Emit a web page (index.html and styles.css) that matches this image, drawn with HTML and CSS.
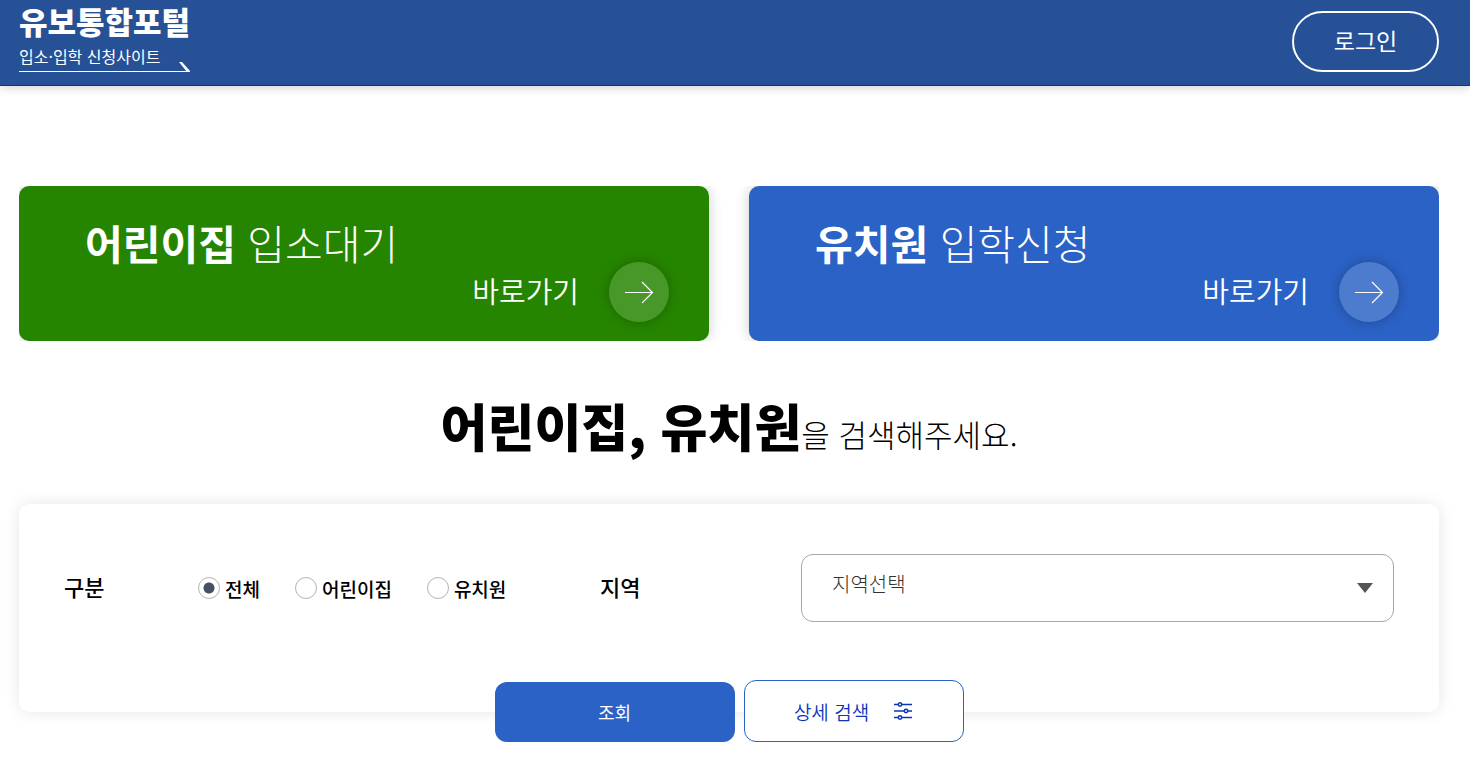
FILE: index.html
```html
<!DOCTYPE html>
<html lang="ko">
<head>
<meta charset="utf-8">
<meta name="viewport" content="width=device-width, initial-scale=1">
<title>유보통합포털</title>
<link rel="stylesheet" href="styles.css">
</head>
<body>
<header class="header">
  <a class="brand" href="#">
    <span class="brand-name">유보통합포털</span>
    <span class="brand-sub">입소·입학 신청사이트</span>
    <svg class="brand-tail" width="12" height="11" viewBox="0 0 12 11" aria-hidden="true"><path d="M1 1h3L12 10v1h-3z" fill="#fff"/></svg>
  </a>
  <button class="login" type="button">로그인</button>
</header>
<main class="main">
  <nav class="cards">
    <a class="card card-green" href="#">
      <span class="card-title"><strong>어린이집</strong> 입소대기</span>
      <span class="card-go"><span class="go-text">바로가기</span>
        <span class="circle"><svg width="30" height="24" viewBox="0 0 30 24" fill="none" stroke="#fff" stroke-width="1.2" aria-hidden="true"><path d="M1 12.500h27M18 2l10.500 10.500L18 23"/></svg></span>
      </span>
    </a>
    <a class="card card-blue" href="#">
      <span class="card-title"><strong>유치원</strong> 입학신청</span>
      <span class="card-go"><span class="go-text">바로가기</span>
        <span class="circle"><svg width="30" height="24" viewBox="0 0 30 24" fill="none" stroke="#fff" stroke-width="1.2" aria-hidden="true"><path d="M1 12.500h27M18 2l10.500 10.500L18 23"/></svg></span>
      </span>
    </a>
  </nav>
  <h1 class="heading"><strong>어린이집, 유치원</strong>을 검색해주세요.</h1>
  <form class="search">
    <div class="panel">
      <span class="label" id="kind">구분</span>
      <div class="radios" role="radiogroup" aria-labelledby="kind">
        <label class="radio"><input type="radio" name="kind" checked>전체</label>
        <label class="radio"><input type="radio" name="kind">어린이집</label>
        <label class="radio"><input type="radio" name="kind">유치원</label>
      </div>
      <label class="label" for="region">지역</label>
      <div class="select-wrap">
        <select class="select" id="region"><option>지역선택</option></select>
        <svg class="caret" width="16" height="10" viewBox="0 0 16 10" aria-hidden="true"><path d="M0 0h16L8 10z" fill="#555"/></svg>
      </div>
    </div>
    <div class="actions">
      <button class="btn btn-primary" type="button">조회</button>
      <button class="btn btn-outline" type="button">상세 검색
        <svg width="20" height="18" viewBox="0 0 20 18" fill="none" stroke="#0a36b8" stroke-width="1.5" aria-hidden="true"><path d="M1 2.500h4M9 2.500h10M1 9h10M15 9h4M1 15.500h4M9 15.500h10"/><circle cx="7" cy="2.500" r="1.700"/><circle cx="13" cy="9" r="1.700"/><circle cx="7" cy="15.500" r="1.700"/></svg>
      </button>
    </div>
  </form>
</main>
</body>
</html>
```
FILE: styles.css
```css
* { box-sizing: border-box; }
body {
  margin: 0;
  background: #fff;
  color: #000;
  font-family: "Noto Sans CJK KR", sans-serif;
}
a { color: inherit; text-decoration: none; }
button, select, input { font-family: inherit; }

.header {
  display: flex;
  justify-content: space-between;
  align-items: flex-end;
  padding: 9px 31px 13px 19px;
  background: #265197;
  border-bottom: 1px solid #0c3580;
  box-shadow: 0 1px 10px rgba(0, 0, 0, 0.2);
  color: #fff;
}
.brand {
  position: relative;
  display: flex;
  flex-direction: column;
  border-bottom: 1px solid #fff;
}
.brand-name { font-size: 31px; font-weight: 900; line-height: 24px; }
.brand-sub { margin-top: 11px; padding-bottom: 3px; font-size: 16px; line-height: 24px; }
.brand-tail { position: absolute; right: 0; bottom: -1px; }
.login {
  width: 147px;
  height: 61px;
  padding: 0 0 4px;
  border: 2px solid #fff;
  border-radius: 31px;
  background: transparent;
  color: #fff;
  font-size: 23px;
  font-weight: 400;
}

.main { padding: 100px 31px 20px 19px; }
.cards {
  display: grid;
  grid-template-columns: 1fr 1fr;
  gap: 40px;
  overflow: hidden;
}
.card {
  padding: 39px 40px 19px 66px;
  border-radius: 10px;
  box-shadow: 0 0 14px rgba(0, 0, 0, 0.2);
  color: #fff;
}
.card-green { background: #258500; }
.card-blue { background: #2b62c5; }
.card-title {
  display: block;
  margin-bottom: 3px;
  font-size: 41px;
  font-weight: 300;
  line-height: 34px;
}
.card-title strong { font-weight: 700; }
.card-go {
  display: flex;
  justify-content: flex-end;
  align-items: center;
  gap: 30px;
  font-size: 29px;
  font-weight: 350;
}
.go-text { padding-bottom: 4px; }
.circle {
  display: grid;
  place-items: center;
  width: 60px;
  height: 60px;
  border-radius: 50%;
  background: rgba(255, 255, 255, 0.16);
  box-shadow: 0 0 12px rgba(0, 0, 0, 0.25);
}

.heading {
  margin: 48px 0 43px;
  font-size: 31px;
  font-weight: 200;
  line-height: 40px;
  text-align: center;
}
.heading strong { font-size: 51px; font-weight: 900; line-height: 72px; }

.panel {
  display: grid;
  grid-template-columns: 134px 402px 201px 1fr;
  align-items: center;
  padding: 50px 45px 90px;
  border-radius: 10px;
  background: #fff;
  box-shadow: 0 0 16px rgba(0, 0, 0, 0.1);
}
.label { padding-bottom: 4px; font-size: 22px; font-weight: 500; }
.radios { display: flex; gap: 35px; }
.radio {
  display: flex;
  align-items: center;
  gap: 5px;
  font-size: 19px;
  font-weight: 500;
}
.radio input {
  appearance: none;
  width: 22px;
  height: 22px;
  margin: 0;
  border: 1px solid #b4b4b4;
  border-radius: 50%;
}
.radio input:checked { background: radial-gradient(circle, #475166 5px, #fff 6px); }
.select-wrap { position: relative; }
.select {
  display: block;
  appearance: none;
  width: 100%;
  height: 68px;
  padding: 0 50px 10px 30px;
  border: 1px solid #a6a6a6;
  border-radius: 12px;
  background: #fff;
  color: #333;
  font-size: 20px;
  font-weight: 300;
}
.caret { position: absolute; right: 21px; top: 29px; pointer-events: none; }

.actions {
  position: relative;
  display: flex;
  justify-content: center;
  align-items: flex-end;
  gap: 9px;
  margin-top: -32px;
}
.btn {
  display: flex;
  justify-content: center;
  align-items: center;
  border-radius: 12px;
  font-size: 18px;
}
.btn-primary { width: 240px; height: 60px; border: 0; background: #2b62c5; color: #fff; }
.btn-outline {
  width: 220px;
  height: 62px;
  gap: 24px;
  border: 1px solid #2b62c5;
  background: #fff;
  color: #0a36b8;
  font-size: 19px;
  font-weight: 350;
}
```
